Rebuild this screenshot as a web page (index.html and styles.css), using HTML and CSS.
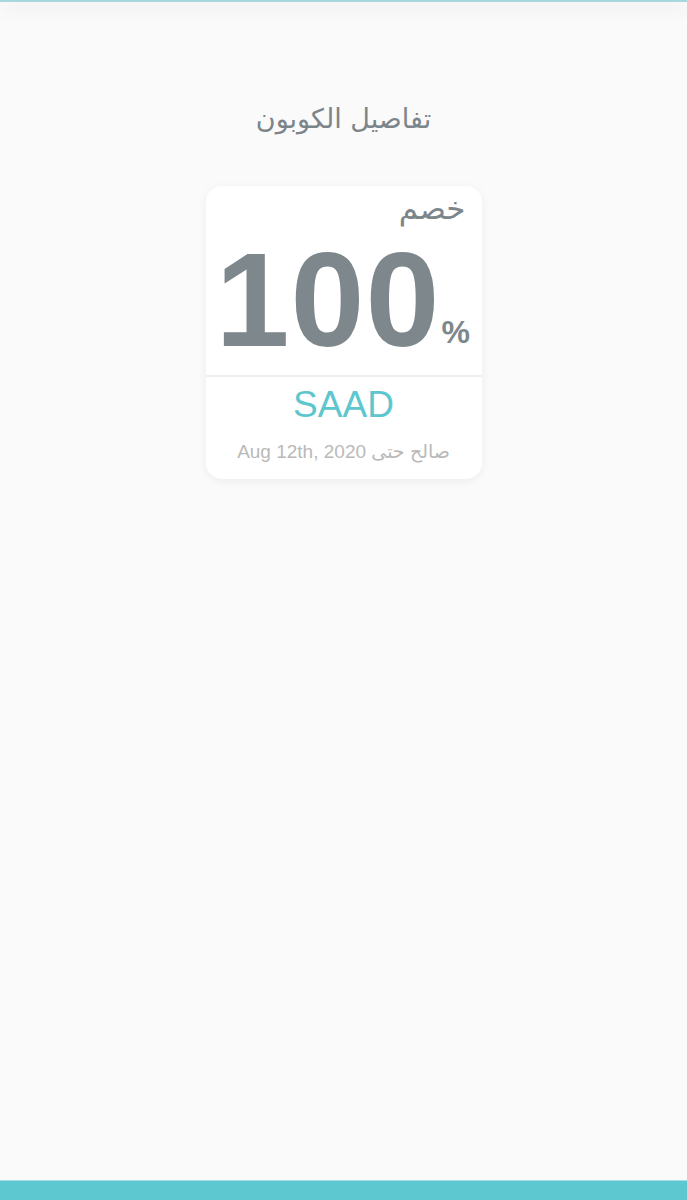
FILE: index.html
```html
<!DOCTYPE html>
<html lang="ar">
<head>
<meta charset="utf-8">
<link rel="stylesheet" href="styles.css">
</head>
<body>
<div class="app">
  <div class="topbar"></div>
  <main class="content">
    <h1 class="title" dir="rtl">تفاصيل الكوبون</h1>
    <div class="card">
      <div class="card-top">
        <div class="label" dir="rtl">خصم</div>
        <div class="amount"><span class="num">100</span><span class="pct">%</span></div>
      </div>
      <div class="card-bottom">
        <div class="code">SAAD</div>
        <div class="valid" dir="rtl">صالح حتى Aug 12th, 2020</div>
      </div>
    </div>
  </main>
  <div class="bottombar"></div>
</div>
</body>
</html>
```
FILE: styles.css
```css
html, body {
  margin: 0;
  padding: 0;
  background: #fafafa;
}
body {
  font-family: "Liberation Sans", "DejaVu Sans", sans-serif;
}
.app {
  height: 1200px;
  display: flex;
  flex-direction: column;
  position: relative;
  overflow: hidden;
}
.topbar {
  height: 2px;
  background: #a9d6da;
  box-shadow: 0 5px 18px rgba(0, 0, 0, 0.22);
}
.content {
  flex: 1;
  display: flex;
  flex-direction: column;
  align-items: center;
}
.title {
  margin: 99px 0 0;
  font-family: "DejaVu Sans", sans-serif;
  font-weight: normal;
  font-size: 27px;
  line-height: 36px;
  color: #7b858a;
}
.card {
  margin-top: 49px;
  width: 276px;
  background: #fff;
  border-radius: 16px;
  box-shadow: 0 2px 10px rgba(0, 0, 0, 0.06);
  display: flex;
  flex-direction: column;
}
.card-top {
  height: 189px;
  border-bottom: 2px solid #efefef;
  display: flex;
  flex-direction: column;
}
.label {
  font-family: "DejaVu Sans", sans-serif;
  font-size: 31px;
  line-height: 40px;
  color: #7b858a;
  padding: 2px 16px 0;
  text-align: right;
}
.amount {
  display: flex;
  align-items: baseline;
  padding-left: 10px;
  margin-top: 2px;
}
.num {
  font-weight: bold;
  font-size: 133px;
  line-height: 140px;
  color: #7d878c;
  letter-spacing: 1px;
}
.pct {
  font-size: 32px;
  font-weight: bold;
  color: #7d878c;
  margin-left: 1px;
  position: relative;
  top: -3px;
}
.card-bottom {
  height: 102px;
  display: flex;
  flex-direction: column;
  align-items: center;
}
.code {
  margin-top: 6px;
  font-size: 37px;
  line-height: 44px;
  color: #5ec6ce;
}
.valid {
  margin-top: 14px;
  font-size: 19px;
  line-height: 22px;
  color: #b9b9b9;
}
.bottombar {
  height: 19px;
  background: #5ec8d0;
  border-top: 1px solid #a3e0e4;
}
```
